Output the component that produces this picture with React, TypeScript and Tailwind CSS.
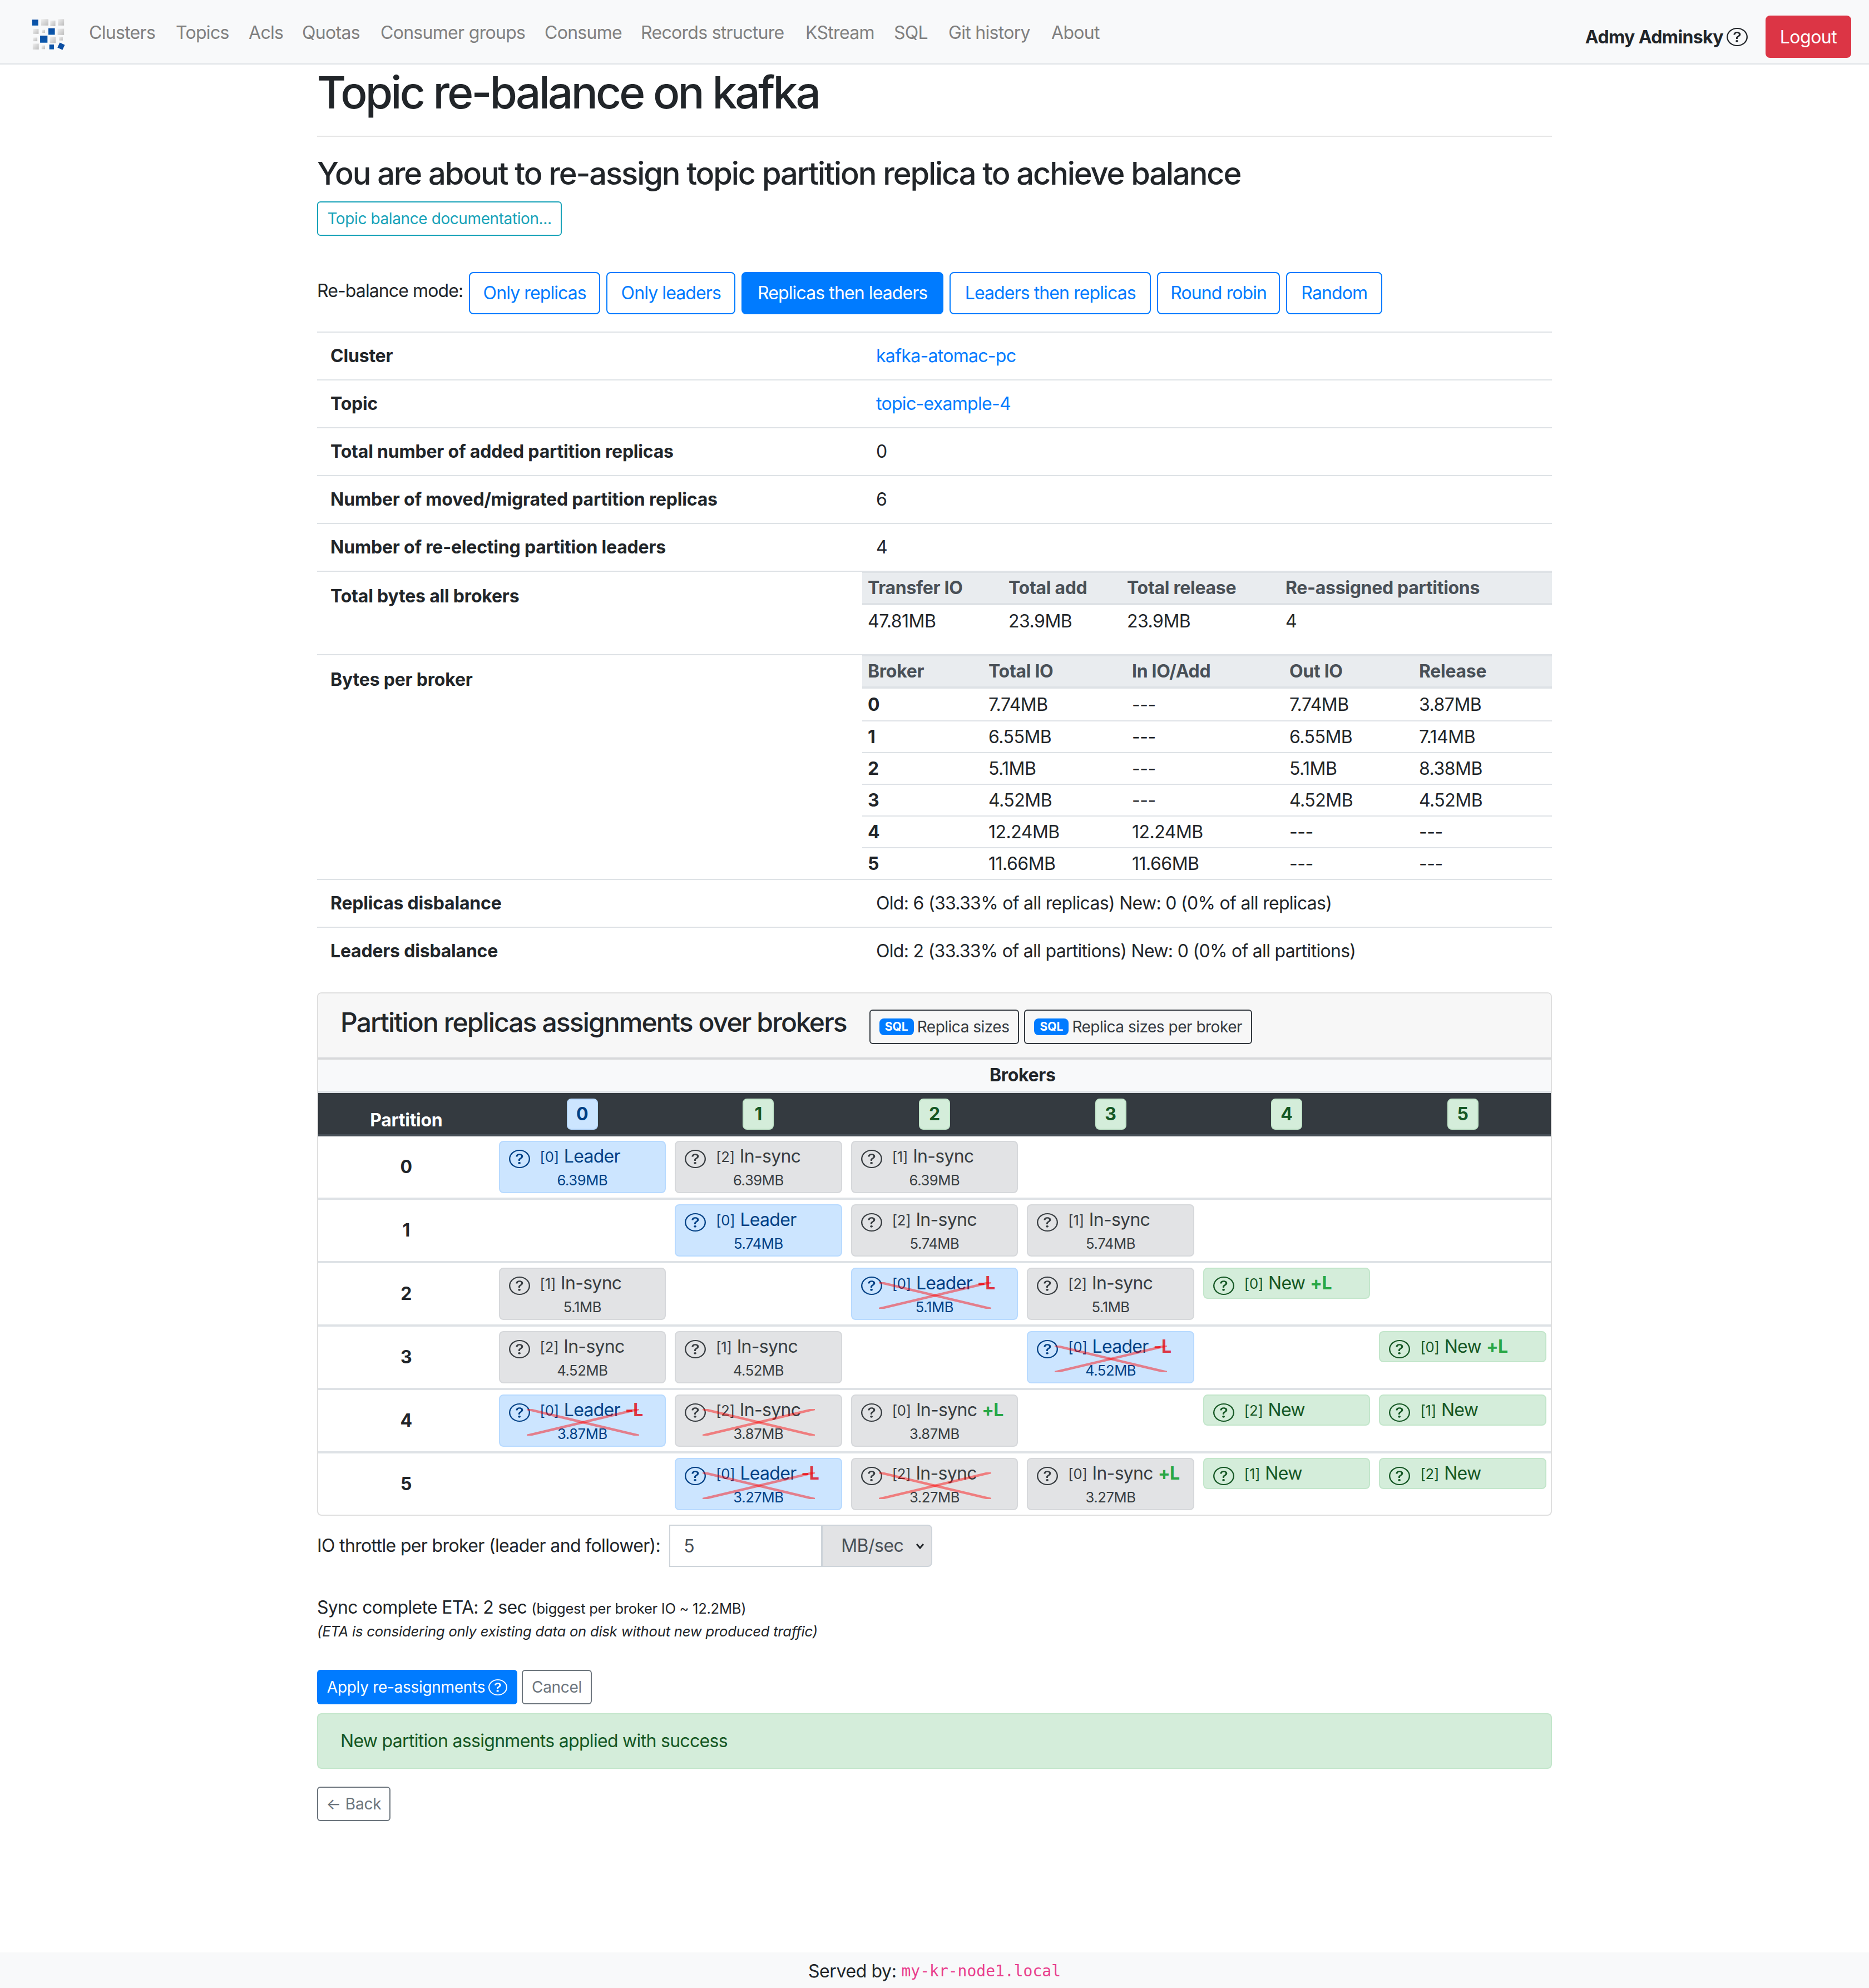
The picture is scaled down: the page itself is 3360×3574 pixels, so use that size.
import React from "react";
import { BsQuestionCircle } from "react-icons/bs";

function Q({ className = "" }: { className?: string }) {
  return <BsQuestionCircle preserveAspectRatio="none" className={"w-[38px] h-[33px] shrink-0 " + className} />;
}

function Logo() {
  const blue = [
    [82, 75, 33, 32],
    [170, 122, 35, 35],
    [125, 162, 40, 38],
    [175, 210, 25, 26],
  ];
  const gray = [
    [130, 72, 40, 35],
    [180, 80, 28, 30],
    [222, 72, 33, 35],
    [87, 125, 30, 27],
    [135, 130, 17, 17],
    [220, 124, 35, 34],
    [87, 172, 23, 20],
    [178, 168, 32, 34],
    [228, 168, 20, 20],
    [85, 205, 33, 32],
    [133, 215, 19, 20],
  ];
  return (
    <svg viewBox="75 68 190 175" className="w-[64px] h-[58px] shrink-0">
      <defs>
        <linearGradient id="lg" x1="0" y1="0" x2="1" y2="1">
          <stop offset="0" stopColor="#f0f0f0" />
          <stop offset="1" stopColor="#bdbdbd" />
        </linearGradient>
        <linearGradient id="lb" x1="0" y1="0" x2="0" y2="1">
          <stop offset="0" stopColor="#0b4ea2" />
          <stop offset="1" stopColor="#0a58ad" />
        </linearGradient>
      </defs>
      {gray.map((r, i) => (
        <rect key={i} x={r[0]} y={r[1]} width={r[2]} height={r[3]} fill="url(#lg)" />
      ))}
      {blue.map((r, i) => (
        <rect key={i} x={r[0]} y={r[1]} width={r[2]} height={r[3]} fill="url(#lb)" />
      ))}
      <rect x="224" y="204" width="30" height="30" fill="#0b4ea2" transform="rotate(25 239 219)" />
    </svg>
  );
}

const navItems = [
  ["Clusters", "w-[156px]"],
  ["Topics", "w-[131px]"],
  ["Acls", "w-[96px]"],
  ["Quotas", "w-[141px]"],
  ["Consumer groups", "w-[295px]"],
  ["Consume", "w-[173px]"],
  ["Records structure", "w-[296px]"],
  ["KStream", "w-[159px]"],
  ["SQL", "w-[98px]"],
  ["Git history", "w-[185px]"],
  ["About", "w-[100px]"],
];

function Nav() {
  return (
    <nav className="h-[116px] bg-[#f8f9fa] border-b-2 border-[#dee2e6] flex items-start pl-[55px] pr-[32px]">
      <div className="mt-[33px] mr-[41px]">
        <Logo />
      </div>
      <div className="flex mt-[35px] text-[#808080] tracking-[-0.7px]">
        {navItems.map(([t, w]) => (
          <span key={t} className={w + " whitespace-nowrap"}>{t}</span>
        ))}
      </div>
      <div className="ml-auto flex items-center mt-[28px]">
        <b className="font-bold tracking-[-0.6px] pt-[2px]">Admy Adminsky</b>
        <Q className="ml-[6px] mr-[32px] text-[#212529]" />
        <button className="h-[76px] w-[154px] bg-[#dc3545] text-white rounded-[8px] tracking-[-0.5px] pt-[2px]">Logout</button>
      </div>
    </nav>
  );
}

const modes: [string, string][] = [
  ["Only replicas", "w-[236px]"],
  ["Only leaders", "w-[232px]"],
  ["Replicas then leaders", "w-[363px]"],
  ["Leaders then replicas", "w-[362px]"],
  ["Round robin", "w-[221px]"],
  ["Random", "w-[173px]"],
];

function Row({ label, children }: { label: string; children: React.ReactNode }) {
  return (
    <div className="flex border-t-2 border-[#dee2e6] h-[86px] items-center">
      <div className="w-[980px] pl-[24px] font-bold tracking-[-0.2px]">{label}</div>
      <div className="pl-[25px] tracking-[-0.7px]">{children}</div>
    </div>
  );
}

function Nested({ cols, head, rows }: { cols: string; head: string[]; rows: string[][] }) {
  return (
    <div className="w-[1240px] tracking-[-0.3px]">
      <div className={"grid border-y-[4px] border-t-2 border-[#dee2e6] bg-[#e9ecef] text-[#495057] font-bold h-[60px] items-center pl-[10px] " + cols}>
        {head.map((h) => (
          <div key={h}>{h}</div>
        ))}
      </div>
      {rows.map((r, i) => (
        <div key={i} className={"grid h-[57px] items-center pl-[10px] tracking-[-0.5px] " + cols + (i ? " border-t-2 border-[#dee2e6]" : "")}>
          {r.map((c, j) => (
            <div key={j} className={rows.length > 1 && j === 0 ? "font-bold" : ""}>{c}</div>
          ))}
        </div>
      ))}
    </div>
  );
}

type Kind = "L" | "G" | "N";
type Chip = { k: Kind; id: number; mb?: string; x?: boolean; d?: "+" | "-" };

const chipClass: Record<Kind, string> = {
  L: "bg-[#cce5ff] border-[#b8daff] text-[#004085]",
  G: "bg-[#e2e3e5] border-[#d6d8db] text-[#383d41]",
  N: "bg-[#d4edda] border-[#c3e6cb] text-[#155724]",
};
const chipName: Record<Kind, string> = { L: "Leader", G: "In-sync", N: "New" };

function ChipBox({ c }: { c: Chip }) {
  return (
    <div className={"relative border-2 rounded-[8px] py-[2px] px-[16px] " + chipClass[c.k]}>
      <div className="flex items-center h-[48px] whitespace-nowrap tracking-[-0.7px]">
        <Q className="mt-[8px]" />
        <span className="ml-[18px] text-[25.6px] tracking-[-0.2px] mt-[2px]">[{c.id}]</span>
        <span className="ml-[9px]">{chipName[c.k]}</span>
        {c.d && (
          <b className={"ml-[9px] font-bold " + (c.d === "+" ? "text-[#28a745]" : "text-[#dc3545]")}>{c.d}L</b>
        )}
      </div>
      {c.mb && <div className="text-center text-[25.6px] leading-[38px] tracking-[-0.4px]">{c.mb}</div>}
      {c.x && (
        <svg viewBox="0 0 200 48" preserveAspectRatio="none" className="absolute left-[48px] top-[24px] w-[202px] h-[48px]">
          <line x1="0" y1="0" x2="200" y2="48" stroke="#ff0000" strokeOpacity="0.45" strokeWidth="4.5" />
          <line x1="0" y1="48" x2="200" y2="0" stroke="#ff0000" strokeOpacity="0.45" strokeWidth="4.5" />
        </svg>
      )}
    </div>
  );
}

const L = (mb: string, x = false): Chip => ({ k: "L", id: 0, mb, x, d: x ? "-" : undefined });
const G = (id: number, mb: string, x = false, d?: "+"): Chip => ({ k: "G", id, mb, x, d });
const N = (id: number, d?: "+"): Chip => ({ k: "N", id, d });

const matrix: (Chip | null)[][] = [
  [L("6.39MB"), G(2, "6.39MB"), G(1, "6.39MB"), null, null, null],
  [null, L("5.74MB"), G(2, "5.74MB"), G(1, "5.74MB"), null, null],
  [G(1, "5.1MB"), null, L("5.1MB", true), G(2, "5.1MB"), N(0, "+"), null],
  [G(2, "4.52MB"), G(1, "4.52MB"), null, L("4.52MB", true), null, N(0, "+")],
  [L("3.87MB", true), G(2, "3.87MB", true), G(0, "3.87MB", false, "+"), null, N(2), N(1)],
  [null, L("3.27MB", true), G(2, "3.27MB", true), G(0, "3.27MB", false, "+"), N(1), N(2)],
];

function SqlBtn({ children }: { children: string }) {
  return (
    <span className="inline-flex items-center h-[62px] px-[16px] border-2 border-[#343a40] rounded-[6px] text-[#343a40] text-[28px] tracking-[-0.5px] whitespace-nowrap">
      <span className="bg-[#007bff] text-white font-bold text-[21px] leading-[30px] h-[30px] px-[10px] rounded-[8px] mr-[6px] tracking-normal">SQL</span>
      {children}
    </span>
  );
}

function Card() {
  return (
    <div className="mt-[32px] border-2 border-[#dfdfdf] rounded-[8px] overflow-hidden">
      <div className="h-[115px] bg-[#f7f7f7] flex items-start pl-[40px] border-b-4 border-[#d8d9db] box-content">
        <h4 className="text-[48px] leading-[58px] font-medium mt-[23px] tracking-[-1.9px] whitespace-nowrap">Partition replicas assignments over brokers</h4>
        <div className="flex gap-[9px] ml-[41px] mt-[29px]">
          <SqlBtn>Replica sizes</SqlBtn>
          <SqlBtn>Replica sizes per broker</SqlBtn>
        </div>
      </div>
      <div className="grid grid-cols-7 h-[60px] bg-[#f8f9fa] border-b-4 border-[#dee2e6] font-bold tracking-[-0.3px]">
        <div />
        <div className="col-span-6 text-center mt-[4px]">Brokers</div>
      </div>
      <div className="grid grid-cols-7 h-[78px] bg-[#343a40] border-b-4 border-[#454d55] text-white font-bold">
        <div className="text-center self-end mb-[1px] tracking-[-0.3px]">Partition</div>
        {[0, 1, 2, 3, 4, 5].map((b) => (
          <div key={b} className="flex justify-center pt-[10px]">
            <span className={"w-[56px] h-[56px] rounded-[8px] border-2 flex items-center justify-center " + (b === 0 ? "bg-[#cce5ff] border-[#b8daff] text-[#004085]" : "bg-[#d4edda] border-[#c3e6cb] text-[#155724]")}>{b}</span>
          </div>
        ))}
      </div>
      {matrix.map((row, i) => (
        <div key={i} className={"grid grid-cols-7 items-start " + (i ? "border-t-4 border-[#dee2e6]" : "")}>
          <div className="h-[110px] flex items-center justify-center font-bold">{i}</div>
          {row.map((c, j) => (
            <div key={j} className="p-[8px]">
              {c && <ChipBox c={c} />}
            </div>
          ))}
        </div>
      ))}
    </div>
  );
}

export default function App() {
  return (
    <div className="min-h-[3574px] flex flex-col bg-white text-[#212529] text-[32px] leading-[48px] [font-family:Inter,sans-serif]">
      <Nav />
      <main className="w-[2220px] mx-auto flex-1">
        <h1 className="text-[80px] leading-[96px] font-medium mt-[2px] tracking-[-3.8px] whitespace-nowrap">Topic re-balance on kafka</h1>
        <hr className="mt-[30px] border-t-2 border-[#e6e6e6]" />
        <h3 className="text-[56px] leading-[67px] font-medium mt-[33px] tracking-[-2.1px] whitespace-nowrap">You are about to re-assign topic partition replica to achieve balance</h3>
        <span className="inline-flex items-center h-[62px] w-[440px] justify-center mt-[16px] border-2 border-[#17a2b8] rounded-[6px] text-[#17a2b8] text-[28px] tracking-[-0.4px]">Topic balance documentation...</span>
        <div className="flex items-start mt-[65px]">
          <span className="mr-[11px] mt-[10px] tracking-[-0.9px] whitespace-nowrap">Re-balance mode:</span>
          <div className="flex gap-[11px]">
            {modes.map(([m, w], i) => (
              <button
                key={m}
                className={"h-[76px] border-2 border-[#007bff] rounded-[8px] tracking-[-0.9px] whitespace-nowrap " + w + (i === 2 ? " bg-[#007bff] text-white" : " text-[#007bff]")}
              >
                {m}
              </button>
            ))}
          </div>
        </div>
        <div className="mt-[31px]">
          <Row label="Cluster"><span className="text-[#007bff]">kafka-atomac-pc</span></Row>
          <Row label="Topic"><span className="text-[#007bff]">topic-example-4</span></Row>
          <Row label="Total number of added partition replicas">0</Row>
          <Row label="Number of moved/migrated partition replicas">6</Row>
          <Row label="Number of re-electing partition leaders">4</Row>
          <div className="flex border-t-2 border-[#dee2e6] h-[150px]">
            <div className="w-[980px] pl-[24px] pt-[20px] font-bold tracking-[-0.2px]">Total bytes all brokers</div>
            <Nested
              cols="grid-cols-[253px_213px_285px_1fr]"
              head={["Transfer IO", "Total add", "Total release", "Re-assigned partitions"]}
              rows={[["47.81MB", "23.9MB", "23.9MB", "4"]]}
            />
          </div>
          <div className="flex border-t-2 border-[#dee2e6] h-[404px]">
            <div className="w-[980px] pl-[24px] pt-[20px] font-bold tracking-[-0.2px]">Bytes per broker</div>
            <Nested
              cols="grid-cols-[217px_258px_283px_233px_1fr]"
              head={["Broker", "Total IO", "In IO/Add", "Out IO", "Release"]}
              rows={[
                ["0", "7.74MB", "---", "7.74MB", "3.87MB"],
                ["1", "6.55MB", "---", "6.55MB", "7.14MB"],
                ["2", "5.1MB", "---", "5.1MB", "8.38MB"],
                ["3", "4.52MB", "---", "4.52MB", "4.52MB"],
                ["4", "12.24MB", "12.24MB", "---", "---"],
                ["5", "11.66MB", "11.66MB", "---", "---"],
              ]}
            />
          </div>
          <Row label="Replicas disbalance">Old: 6 (33.33% of all replicas) New: 0 (0% of all replicas)</Row>
          <Row label="Leaders disbalance">Old: 2 (33.33% of all partitions) New: 0 (0% of all partitions)</Row>
        </div>
        <Card />
        <div className="flex items-center mt-[16px]">
          <span className="mr-[16px] whitespace-nowrap tracking-[-0.65px]">IO throttle per broker (leader and follower):</span>
          <input readOnly value="5" className="w-[275px] h-[76px] border-2 border-[#ced4da] px-[24px] text-[#495057] outline-none" />
          <div className="relative">
            <select className="appearance-none w-[198px] h-[76px] bg-[#e2e3e5] border-2 border-[#ced4da] rounded-r-[8px] pl-[32px] text-[#495057] outline-none tracking-[-0.5px]">
              <option>MB/sec</option>
            </select>
            <svg viewBox="0 0 16 16" className="absolute right-[14px] top-[30px] w-[16px] h-[16px] pointer-events-none" fill="none" stroke="#212529" strokeWidth="3">
              <path d="M2 5l6 7 6-7" />
            </svg>
          </div>
        </div>
        <div className="mt-[49px] tracking-[-0.7px]">
          Sync complete ETA: 2 sec <span className="text-[25.6px] tracking-[-0.3px]">(biggest per broker IO ~ 12.2MB)</span>
        </div>
        <div className="text-[25.6px] leading-[38px] italic tracking-[-0.2px] mt-[-2px]">(ETA is considering only existing data on disk without new produced traffic)</div>
        <div className="flex gap-[8px] mt-[50px] text-[28px] tracking-[-0.3px]">
          <button className="h-[62px] w-[360px] bg-[#007bff] text-white rounded-[6px] flex items-center justify-center">
            Apply re-assignments
            <Q className="ml-[6px] !w-[34px] !h-[29px]" />
          </button>
          <button className="h-[62px] w-[126px] border-2 border-[#6c757d] text-[#6c757d] rounded-[6px]">Cancel</button>
        </div>
        <div className="mt-[16px] h-[100px] bg-[#d4edda] border-2 border-[#c3e6cb] rounded-[8px] text-[#155724] flex items-center px-[40px] tracking-[-0.7px]">New partition assignments applied with success</div>
        <button className="mt-[32px] h-[62px] w-[132px] border-2 border-[#6c757d] text-[#6c757d] rounded-[6px] text-[28px] tracking-[-0.2px]">← Back</button>
      </main>
      <footer className="h-[64px] bg-[#f8f9fa] flex items-center justify-center pt-[3px]">
        <span className="tracking-[-0.4px]">Served by:</span>
        <code className="ml-[9px] text-[28px] text-[#e83e8c] [font-family:'DejaVu_Sans_Mono',monospace] tracking-normal">my-kr-node1.local</code>
      </footer>
    </div>
  );
}
